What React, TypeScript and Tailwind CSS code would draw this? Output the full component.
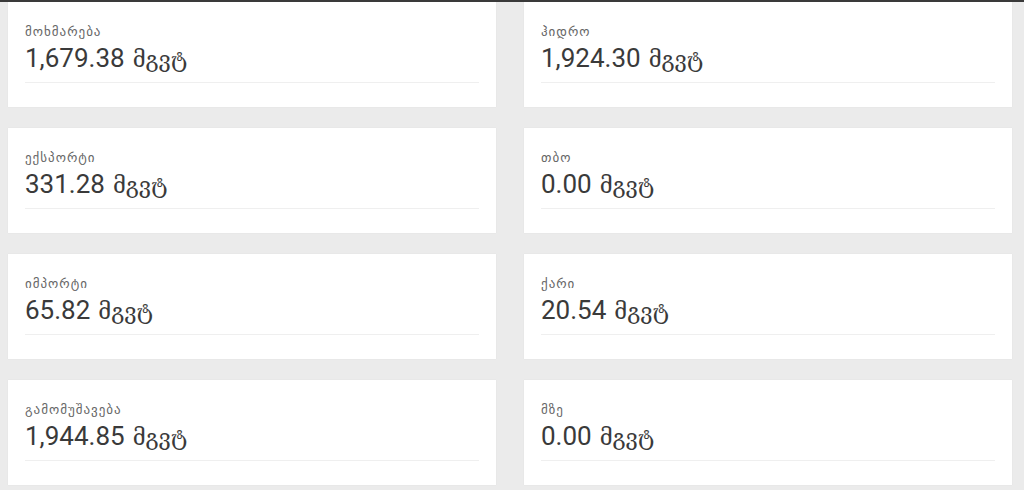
const items = [
    { label: "მოხმარება", value: "1,679.38" },
    { label: "ჰიდრო", value: "1,924.30" },
    { label: "ექსპორტი", value: "331.28" },
    { label: "თბო", value: "0.00" },
    { label: "იმპორტი", value: "65.82" },
    { label: "ქარი", value: "20.54" },
    { label: "გამომუშავება", value: "1,944.85" },
    { label: "მზე", value: "0.00" },
];

function StatCard({ label, value }: { label: string; value: string }) {
    return (
        <div className="bg-white px-[17px] pt-[22px] pb-[24px] shadow-[0_0_1px_rgba(0,0,0,0.08)]">
            <div className="h-[16px] text-[13px] leading-[16px] tracking-[1px] text-[#666] font-['DejaVu_Sans',sans-serif]">{label}</div>
            <div className="mt-[3px] h-[30px] text-[26px] leading-[30px] text-[#3a3a3a] font-['Roboto',sans-serif] whitespace-nowrap">
                {value}<span className="ml-[8px] text-[22px] leading-none font-['DejaVu_Serif',serif]">მგვტ</span>
            </div>
            <div className="mt-[9px] h-px bg-[#efefef]"></div>
        </div>
    );
}

function App() {
    return (
        <div className="w-full h-[490px] overflow-hidden bg-[#ebebeb] border-t-2 border-[#3a3a3a]">
            <div className="grid grid-cols-2 gap-x-[28px] gap-y-[21px] pl-[8px] pr-[12px]">
                {items.map((it) => (
                    <StatCard key={it.label} label={it.label} value={it.value} />
                ))}
            </div>
        </div>
    );
}

export default App;
